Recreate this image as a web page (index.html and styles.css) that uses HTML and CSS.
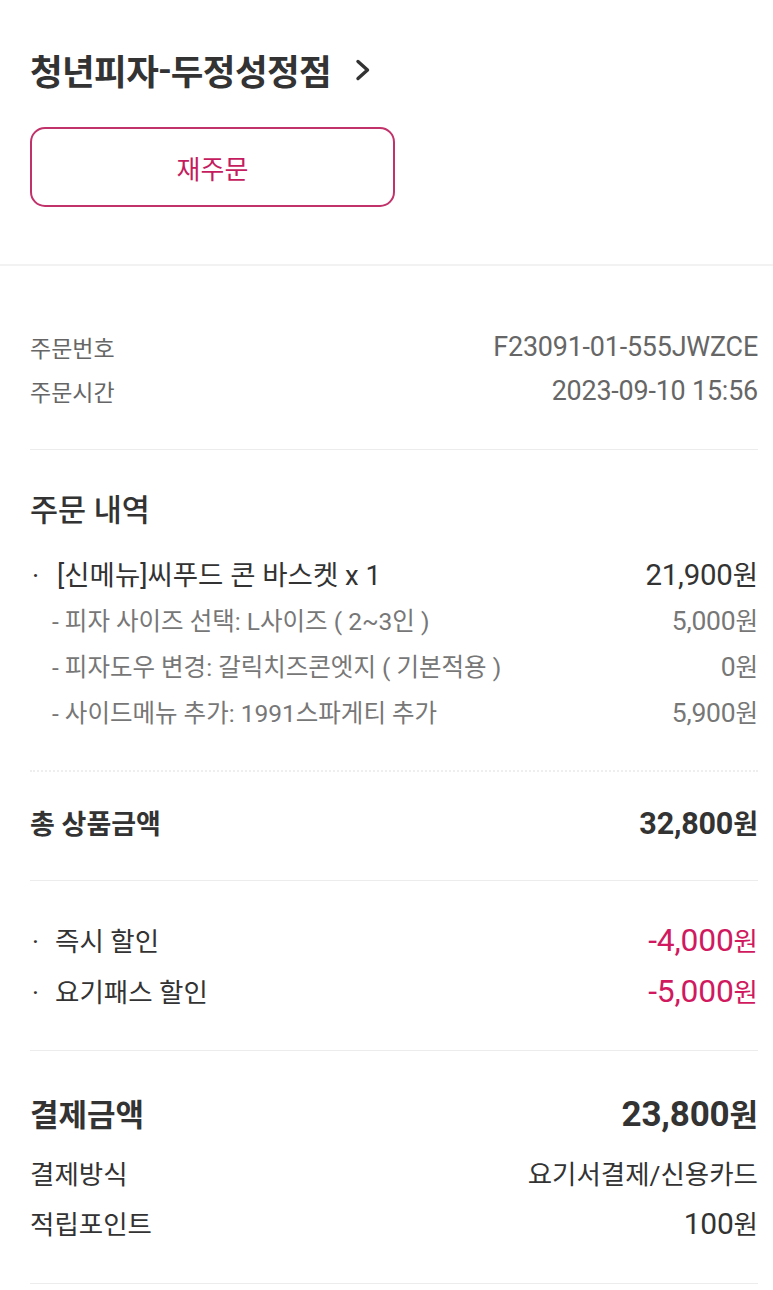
FILE: index.html
```html
<!DOCTYPE html>
<html lang="ko">
<head>
<meta charset="utf-8">
<link rel="stylesheet" href="styles.css">
</head>
<body>
<div class="page">
  <section class="header">
    <div class="store">
      <span class="store-name">청년피자-두정성정점</span>
      <svg class="chev" width="16" height="24" viewBox="0 0 16 24"><path d="M3 3.5 L12.5 12 L3 20.5" fill="none" stroke="#333" stroke-width="3.4" stroke-linecap="round" stroke-linejoin="round"/></svg>
    </div>
    <button class="reorder">재주문</button>
  </section>
  <div class="thick-sep"></div>
  <section class="body">
    <div class="info">
      <div class="row info-row"><span>주문번호</span><span class="n">F23091-01-555JWZCE</span></div>
      <div class="row info-row"><span>주문시간</span><span class="n">2023-09-10 15:56</span></div>
    </div>
    <div class="divider"></div>
    <div class="orders">
      <h2 class="orders-title">주문 내역</h2>
      <div class="row item"><span><span class="dot">·</span>[신메뉴]씨푸드 콘 바스켓 x 1</span><span><span class="n">21,900</span>원</span></div>
      <div class="row sub"><span>- 피자 사이즈 선택: L사이즈 ( 2~3인 )</span><span><span class="n">5,000</span>원</span></div>
      <div class="row sub"><span>- 피자도우 변경: 갈릭치즈콘엣지 ( 기본적용 )</span><span><span class="n">0</span>원</span></div>
      <div class="row sub"><span>- 사이드메뉴 추가: 1991스파게티 추가</span><span><span class="n">5,900</span>원</span></div>
    </div>
    <div class="divider dotted"></div>
    <div class="total">
      <div class="row total-row"><span>총 상품금액</span><span><span class="n">32,800</span>원</span></div>
    </div>
    <div class="divider"></div>
    <div class="discounts">
      <div class="row disc"><span><span class="dot">·</span>즉시 할인</span><span class="pink"><span class="n">-4,000</span>원</span></div>
      <div class="row disc"><span><span class="dot">·</span>요기패스 할인</span><span class="pink"><span class="n">-5,000</span>원</span></div>
    </div>
    <div class="divider"></div>
    <div class="pay">
      <div class="row pay-total"><span>결제금액</span><span><span class="n">23,800</span>원</span></div>
      <div class="row pay-row"><span>결제방식</span><span>요기서결제/신용카드</span></div>
      <div class="row pay-row"><span>적립포인트</span><span><span class="n">100</span>원</span></div>
    </div>
    <div class="divider"></div>
  </section>
</div>
</body>
</html>
```
FILE: styles.css
```css
* { box-sizing: border-box; }
html, body { margin: 0; padding: 0; background: #fff; }
body {
  font-family: Roboto, "Noto Sans CJK KR", sans-serif;
  color: #333;
  width: 773px;
}
.header { padding: 47px 0 57px 30px; }
.store { display: flex; align-items: center; height: 44px; }
.store-name {
  font-family: "Noto Sans CJK KR", sans-serif;
  font-size: 35.5px;
  font-weight: 700;
  color: #333;
  letter-spacing: -0.6px;
}
.chev { margin-left: 24px; margin-top: 2px; }
.reorder {
  display: block;
  margin-top: 36px;
  width: 365px;
  height: 80px;
  border: 2px solid #c2326a;
  border-radius: 15px;
  background: #fff;
  color: #c41c5e;
  font-family: "Noto Sans CJK KR", sans-serif;
  font-size: 26px;
  padding: 0;
}
.thick-sep { height: 2px; background: #f2f2f2; }
.body { padding: 0 15px 0 30px; }
.row { display: flex; justify-content: space-between; align-items: center; white-space: nowrap; }
.n { font-size: 1.13em; letter-spacing: -0.2px; }
.info { padding: 59px 0 36px; }
.info-row { height: 44px; font-size: 23px; color: #666; }
.info-row .n { font-size: 1.17em; }
.divider { height: 1px; background: #ececec; }
.divider.dotted { height: 0; background: none; border-top: 2px dotted #eeeeee; }
.orders { padding: 41px 0 36px; }
.orders-title { margin: 0 0 19px; height: 40px; line-height: 40px; font-size: 30.5px; font-weight: 500; color: #333; }
.item { height: 46px; font-size: 27.5px; color: #333; }
.item .n { font-size: 1.07em; }
.sub { height: 46px; font-size: 24.5px; color: #777; padding-left: 22px; }
.sub .n { font-size: 1.08em; }
.dot { display: inline-block; width: 27px; padding-left: 2px; }
.disc .dot { width: 25px; }
.total { padding: 30px 0 38px; }
.total-row { height: 40px; font-size: 27px; font-weight: 700; color: #333; }
.discounts { padding: 33px 0 34px; }
.disc { height: 51px; font-size: 26.5px; color: #333; }
.disc .n { font-size: 1.2em; }
.pink { color: #d0195f; }
.pay { padding: 39px 0 36px; }
.pay-total { height: 44px; font-size: 31px; font-weight: 700; color: #333; margin-bottom: 13px; }
.pay-row { height: 50px; font-size: 26.5px; color: #333; }
```
